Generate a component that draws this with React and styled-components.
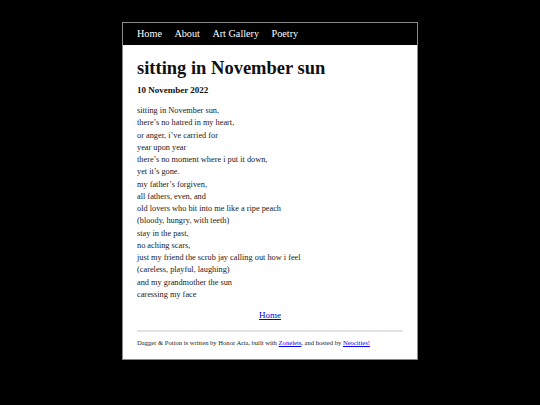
import React from "react";
import styled, { createGlobalStyle } from "styled-components";

const GlobalStyle = createGlobalStyle`
	body {
		margin: 0;
		background-color: #000;
		font-family: "Liberation Serif", Georgia, serif;
	}
`;

const poem = [
	"sitting in November sun,",
	"there’s no hatred in my heart,",
	"or anger, i’ve carried for",
	"year upon year",
	"there’s no moment where i put it down,",
	"yet it’s gone.",
	"my father’s forgiven,",
	"all fathers, even, and",
	"old lovers who bit into me like a ripe peach",
	"(bloody, hungry, with teeth)",
	"stay in the past,",
	"no aching scars,",
	"just my friend the scrub jay calling out how i feel",
	"(careless, playful, laughing)",
	"and my grandmother the sun",
	"caressing my face",
];

const App = () => {
	return (
		<>
			<GlobalStyle />
			<Page>
				<Nav>
					<NavLink href="#">Home</NavLink>
					<NavLink href="#">About</NavLink>
					<NavLink href="#">Art Gallery</NavLink>
					<NavLink href="#">Poetry</NavLink>
				</Nav>
				<Main>
					<Title>sitting in November sun</Title>
					<PostDate>10 November 2022</PostDate>
					<Poem>
						{poem.map((line, i) => (
							<React.Fragment key={i}>
								{line}
								<br />
							</React.Fragment>
						))}
					</Poem>
					<HomeLink>
						<a href="#">Home</a>
					</HomeLink>
					<Footer>
						Dagger &amp; Potion is written by Honor Aria, built with{" "}
						<a href="#">Zonelets</a>, and hosted by <a href="#">Neocities!</a>
					</Footer>
				</Main>
			</Page>
		</>
	);
};

export default App;

const Page = styled.div`
	width: 294px;
	margin: 22px auto 0;
	border: 1px solid #8a8a8a;
	background-color: #fff;
`;

const Nav = styled.nav`
	display: flex;
	gap: 12.5px;
	align-items: center;
	height: 22px;
	padding: 0 14px;
	background-color: #000;
`;

const NavLink = styled.a`
	color: #fff;
	text-decoration: none;
	font-size: 10.2px;
	line-height: 12px;
	margin-top: -1px;
`;

const Main = styled.main`
	padding: 12px 14px 12px;
	color: #222;
`;

const Title = styled.h1`
	margin: 0;
	font-size: 18.5px;
	line-height: 22px;
	font-weight: bold;
	color: #111;
`;

const PostDate = styled.h4`
	margin: 5px 0 0;
	font-size: 9px;
	line-height: 12px;
	font-weight: bold;
	color: #111;
`;

const Poem = styled.p`
	margin: 9px 0 0;
	font-size: 8.3px;
	line-height: 12.27px;
`;

const HomeLink = styled.p`
	margin: 9px 0 0;
	text-align: center;
	font-size: 9px;

	a {
		color: #0000ee;
	}
`;

const Footer = styled.footer`
	margin-top: 10px;
	padding-top: 7px;
	border-top: 2px solid #e2e2e2;
	font-size: 6.6px;
	line-height: 8px;

	a {
		color: #0000ee;
	}
`;
